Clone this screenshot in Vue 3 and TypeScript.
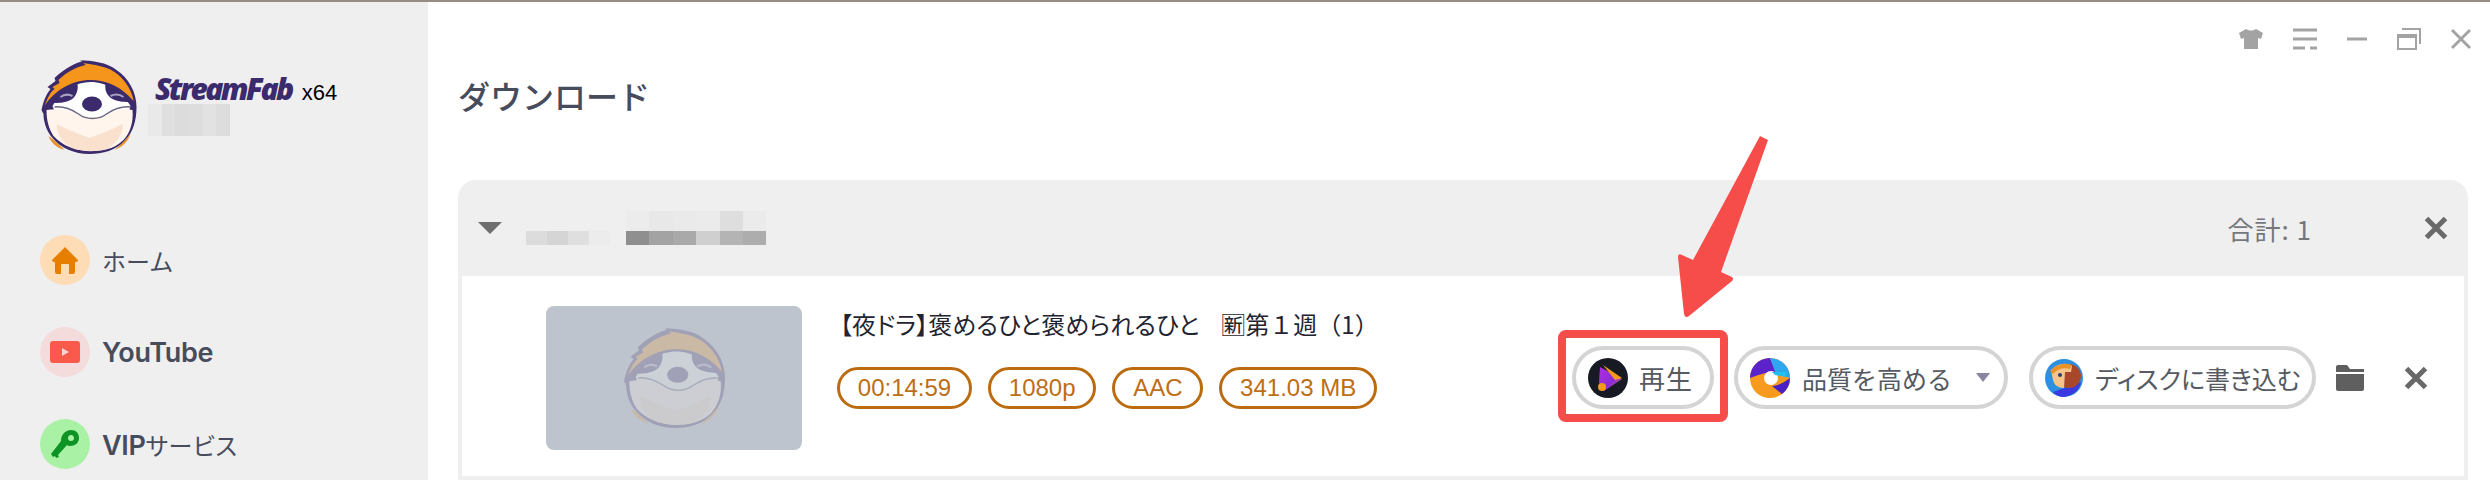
<script setup lang="ts">
const tags: string[] = ['00:14:59', '1080p', 'AAC', '341.03 MB']

// mosaic blocks that hide the account name and the group title
const accountBlur: string[] = ['#e9e9ea', '#dfdfe0', '#dcdcdd', '#dddddd', '#e2e2e3', '#dddddd']
const nameBlurTop: string[] = ['#ececec', '#e8e8e8', '#eaeaea', '#ebebeb', '#dedede', '#ebebeb']
const nameBlurLeft: string[] = ['#dcdcdc', '#d5d5d5', '#dfdfdf', '#ececec']
const nameBlurRight: string[] = ['#8f8f8f', '#a3a3a3', '#a9a9a9', '#cfcfcf', '#b4b4b4', '#adadad']
</script>

<template>
  <div class="page">
    <svg class="defs" width="0" height="0">
      <defs>
        <symbol id="sloth" viewBox="0 0 96 94">
          <path d="M1 50 C3 40 6 34 10 29 L7 27 L15 21 L14 18 C24 8 36 3 42 1 L39 0 C52 1 66 2 76 10 C88 18 96 32 96 47 C96 60 93 72 84 81 C76 90 62 94 49 94 C34 94 20 88 12 78 C5 70 3 60 3 54 Z" fill="#3b2a6c"/>
          <path d="M4 46 C8 36 10 32 14 29 L12 27 L19 23 L18 20 C26 12 36 7 45 5 L43 3 C54 5 68 6 78 15 C86 22 92 32 93 41 C80 26 66 20 50 20 C32 20 14 30 4 46 Z" fill="#f6951b"/>
          <path d="M12 46 C20 30 36 22 50 22 C66 22 82 32 90 46 L84 66 L20 66 Z" fill="#fff"/>
          <path d="M12 43 C18 32 28 26 37 24 C38 29 36 37 30 40 C24 43 17 43 12 43 Z" fill="#3b2a6c"/>
          <path d="M90 42 C85 31 75 25 65 24 C64 29 66 36 72 39 C78 42 85 42 90 42 Z" fill="#3b2a6c"/>
          <path d="M20 37 C24 34 28 34 32 36 M70 36 C74 34 79 34 83 37" stroke="#a9a2c0" stroke-width="2" fill="none"/>
          <ellipse cx="51.500" cy="44" rx="10" ry="7.500" fill="#3b2a6c"/>
          <path d="M6 50 C18 48 28 50 36 54 C46 60 58 60 68 54 C76 50 84 48 92 50 C93 62 90 72 83 80 C73 90 60 91 49 91 C36 91 22 86 13 76 C8 68 6 60 6 50 Z" fill="#fff5ec"/>
          <path d="M16 64 C28 70 38 74 49 78 C60 74 70 70 82 64 C84 72 76 84 66 89 C56 92 42 92 32 88 C24 84 16 76 16 64 Z" fill="#f9e1cd"/>
          <path d="M8 76 C14 80 19 85 24 90 C16 88 10 82 8 76 Z M90 74 C85 80 80 85 74 90 C82 87 88 81 90 74 Z" fill="#e8912a"/>
          <path d="M14 47 C24 46 32 50 38 54 C46 60 58 60 66 54 C72 50 80 46 90 47" stroke="#6b6780" stroke-width="1.500" fill="none"/>
        </symbol>
      </defs>
    </svg>

    <div class="topline"></div>

    <div class="app">
      <aside class="sidebar">
        <div class="brand">
          <svg class="logo"><use href="#sloth"/></svg>
          <div class="brand-text">
            <div class="brand-name">
              <span class="stream">StreamFab</span>
              <span class="bits">x64</span>
            </div>
            <div class="account-blur">
              <i v-for="(c, i) in accountBlur" :key="i" :style="{ background: c }"></i>
            </div>
          </div>
        </div>

        <nav class="nav">
          <div class="nav-item">
            <span class="nav-icon home">
              <svg width="28" height="28" viewBox="0 0 28 28">
                <path d="M14 1 L27 14 Q27 16 25 16 L24 16 L24 26 Q24 28 22 28 L18 28 L18 19 Q18 18 17 18 L11 18 Q10 18 10 19 L10 28 L6 28 Q4 28 4 26 L4 16 L3 16 Q1 16 1 14 Z" fill="#e67f00"/>
              </svg>
            </span>
            <span class="nav-label thin">ホーム</span>
          </div>
          <div class="nav-item">
            <span class="nav-icon yt">
              <svg width="30" height="22" viewBox="0 0 30 22">
                <rect width="30" height="22" rx="3" fill="#fa5a4c"/>
                <path d="M12 7 L19 11 L12 15 Z" fill="#fbd5d0"/>
              </svg>
            </span>
            <span class="nav-label">YouTube</span>
          </div>
          <div class="nav-item">
            <span class="nav-icon vip">
              <svg width="30" height="30" viewBox="0 0 30 30">
                <path fill-rule="evenodd" d="M21 1 C26 1 29 4 29 9 C29 14 25 17 20 17 C19 17 18 17 17 16 L8 26 L9 28 L6 29 L5 27 L3 28 L1 25 L11 12 C11 6 15 1 21 1 Z M21 6 C19 6 18 7.500 18 9 C18 11 19 12 21 12 C23 12 24 11 24 9 C24 7.500 23 6 21 6 Z" fill="#0e9424"/>
              </svg>
            </span>
            <span class="nav-label">VIP<span class="thin kana">サービス</span></span>
          </div>
        </nav>
      </aside>

      <main class="main">
        <div class="winbar">
          <svg width="24" height="22" viewBox="0 0 24 22">
            <path d="M7 1 Q12 4 17 1 L24 5 L22 11 L19 10 L19 21 L5 21 L5 10 L2 11 L0 5 Z" fill="#a3a3a3"/>
          </svg>
          <svg width="24" height="22" viewBox="0 0 24 22">
            <path d="M0 2 H24 M0 11 H24 M0 20 H12 M17 20 H24" stroke="#a3a3a3" stroke-width="3"/>
          </svg>
          <svg width="20" height="22" viewBox="0 0 20 22">
            <path d="M0 11 H20" stroke="#a3a3a3" stroke-width="3"/>
          </svg>
          <svg width="24" height="22" viewBox="0 0 24 22">
            <path d="M5 1 H23 V16 M1 7 H19 V21 H1 Z M1 9 H19" stroke="#a3a3a3" stroke-width="2" fill="none"/>
            <path d="M1 7 H19 V10 H1 Z" fill="#a3a3a3"/>
          </svg>
          <svg width="20" height="22" viewBox="0 0 20 22">
            <path d="M1 2 L19 20 M19 2 L1 20" stroke="#a3a3a3" stroke-width="3"/>
          </svg>
        </div>

        <h1 class="title">ダウンロード</h1>

        <section class="card">
          <header class="card-head">
            <span class="caret"></span>
            <div class="name-blur">
              <div class="blur-col">
                <div class="blur-row top-left"></div>
                <div class="blur-row">
                  <i v-for="(c, i) in nameBlurLeft" :key="i" :style="{ background: c }"></i>
                </div>
              </div>
              <div class="blur-col">
                <div class="blur-row">
                  <i v-for="(c, i) in nameBlurTop" :key="i" :style="{ background: c }"></i>
                </div>
                <div class="blur-row">
                  <i v-for="(c, i) in nameBlurRight" :key="i" :style="{ background: c }"></i>
                </div>
              </div>
            </div>
            <span class="total">合計: 1</span>
            <svg class="head-close" width="24" height="24" viewBox="0 0 24 24">
              <path d="M2.500 2.500 L21.500 21.500 M21.500 2.500 L2.500 21.500" stroke="#696969" stroke-width="5"/>
            </svg>
          </header>

          <div class="row">
            <div class="thumb">
              <svg class="thumb-logo"><use href="#sloth"/></svg>
            </div>

            <div class="info">
              <div class="video-title">【夜ドラ】褒めるひと褒められるひと<span class="episode">🈟第１週（1）</span></div>
              <div class="tags">
                <span v-for="t in tags" :key="t" class="tag">{{ t }}</span>
              </div>
            </div>

            <div class="actions">
              <button class="pill play">
                <svg width="40" height="40" viewBox="0 0 40 40">
                  <defs>
                    <linearGradient id="playGrad" x1="0" y1="0" x2="1" y2="1">
                      <stop offset="0" stop-color="#b02fe0"/>
                      <stop offset="0.6" stop-color="#8c2bd8"/>
                      <stop offset="1" stop-color="#f08c1e"/>
                    </linearGradient>
                  </defs>
                  <circle cx="20" cy="20" r="20" fill="#171a22"/>
                  <path d="M12 9 L34 21 L16 33 Q11 30 11 24 Z" fill="url(#playGrad)"/>
                  <path d="M15 7 L34 20 L27 22 Z" fill="#f59a1c"/>
                  <circle cx="14" cy="29" r="4" fill="#f59a1c"/>
                </svg>
                <span class="wide">再生</span>
              </button>

              <button class="pill upscale">
                <svg width="40" height="40" viewBox="0 0 40 40">
                  <circle cx="20" cy="20" r="20" fill="#f79a1e"/>
                  <path d="M0 20 A20 20 0 0 1 20 0 L26 14 Q14 14 0 20 Z" fill="#5b23c9"/>
                  <path d="M20 0 A20 20 0 0 1 40 20 L26 16 Z" fill="#2fa7f0"/>
                  <path d="M40 20 A20 20 0 0 1 32 36 L22 28 Q30 28 40 20 Z" fill="#4a1fc4"/>
                  <circle cx="21" cy="20" r="7" fill="#fff"/>
                  <path d="M22 14 H36 V19 L25 17 Z" fill="#25c0ef"/>
                </svg>
                <span class="label">品質を高める</span>
                <span class="pill-caret"></span>
              </button>

              <button class="pill disc">
                <svg width="38" height="40" viewBox="0 0 38 40">
                  <circle cx="19" cy="20" r="19" fill="#2c8fe0"/>
                  <path d="M8 34 Q20 30 36 24 Q34 36 19 39 Q12 39 8 34 Z" fill="#3a3ae0"/>
                  <circle cx="24" cy="18" r="12" fill="#a8482a"/>
                  <path d="M6 12 Q16 2 27 8 L26 14 L20 14 L19 30 Q10 30 8 22 Z" fill="#f5c48a"/>
                  <path d="M5 13 Q15 3 27 7 L25 11 Q15 8 8 16 Z" fill="#e9922a"/>
                  <circle cx="15" cy="17" r="2" fill="#2d3a70"/>
                </svg>
                <span class="palt">ディスクに書き込む</span>
              </button>

              <svg class="folder" width="28" height="26" viewBox="0 0 28 26">
                <path d="M2 0 H11 L14 4 H28 V7 H0 V2 Q0 0 2 0 Z M0 9 H28 V24 Q28 26 26 26 H2 Q0 26 0 24 Z" fill="#5f5f5f"/>
              </svg>
              <svg class="row-close" width="24" height="24" viewBox="0 0 24 24">
                <path d="M2.500 2.500 L21.500 21.500 M21.500 2.500 L2.500 21.500" stroke="#696969" stroke-width="5"/>
              </svg>
            </div>
          </div>
        </section>
      </main>
    </div>

    <!-- annotations drawn over the screenshot -->
    <div class="mark-box"></div>
    <svg class="mark-arrow" width="100" height="190" viewBox="0 0 100 190">
      <path d="M82 1 L90 5 L43 137 L54 142 Q56 144 54 146 L11 181 Q7 184 6 179 L0 122 Q0 118 4 120 L15 125 Z" fill="#f64d4b"/>
    </svg>
  </div>
</template>

<style scoped>
.page {
  position: relative;
  width: 2490px;
  height: 480px;
  overflow: hidden;
  background: #fff;
  font-family: "Liberation Sans", "Noto Sans CJK JP", sans-serif;
}

.defs {
  position: absolute;
}

.topline {
  height: 2px;
  background: #978b82;
}

.app {
  display: flex;
  height: 478px;
}

.sidebar {
  width: 428px;
  flex-shrink: 0;
  background: #efeff0;
  padding: 58px 0 0 40px;
  box-sizing: border-box;
}

.brand {
  display: flex;
  height: 94px;
}

.logo {
  width: 97px;
  height: 94px;
  flex-shrink: 0;
}

.brand-text {
  margin-left: 11px;
}

.brand-name {
  display: flex;
  align-items: baseline;
  height: 44px;
  padding: 12px 0 0 7px;
  box-sizing: border-box;
}

.stream {
  font-family: "Open Sans", sans-serif;
  font-weight: 800;
  font-style: italic;
  font-size: 30px;
  letter-spacing: -2.600px;
  line-height: 34px;
  color: #3b2a6c;
}

.bits {
  margin-left: 10px;
  font-size: 22px;
  color: #000;
}

.account-blur {
  display: flex;
  width: 82px;
  height: 32px;
}

.account-blur i {
  flex: 1;
}

.nav {
  display: flex;
  flex-direction: column;
  gap: 42px;
  margin-top: 81px;
}

.nav-item {
  display: flex;
  align-items: center;
  gap: 12px;
  height: 50px;
}

.nav-icon {
  width: 50px;
  height: 50px;
  border-radius: 50%;
  display: flex;
  align-items: center;
  justify-content: center;
}

.home { background: #fddcb6; }
.yt { background: #f5dcdc; }
.vip { background: #a9f2a5; }

.nav-label {
  font-family: Inter, "Noto Sans CJK JP", sans-serif;
  font-size: 27px;
  font-weight: 600;
  letter-spacing: -0.300px;
  color: #474c5c;
}

.thin {
  font-family: "Noto Sans CJK JP", sans-serif;
  font-size: 24px;
  font-weight: 400;
  letter-spacing: 0;
}

.kana {
  font-feature-settings: "palt";
  letter-spacing: 0.500px;
}

.main {
  flex: 1;
  position: relative;
  padding-left: 30px;
}

.winbar {
  display: flex;
  justify-content: flex-end;
  align-items: center;
  gap: 30px;
  width: 2013px;
  height: 22px;
  margin-top: 26px;
}

.title {
  margin: 22px 0 0;
  font-family: "Noto Sans CJK JP", sans-serif;
  font-size: 32px;
  line-height: 46px;
  font-weight: 500;
  color: #474c5c;
}

.card {
  width: 2010px;
  height: 300px;
  margin-top: 62px;
  background: #efefef;
  border-radius: 18px 18px 0 0;
  box-sizing: border-box;
  padding: 0 4px 4px;
}

.card-head {
  display: flex;
  align-items: center;
  height: 96px;
}

.caret {
  width: 0;
  height: 0;
  margin: 0 0 0 16px;
  border-left: 12px solid transparent;
  border-right: 12px solid transparent;
  border-top: 12px solid #6e6e6e;
}

.name-blur {
  display: flex;
  gap: 16px;
  margin-left: 24px;
}

.blur-col {
  display: flex;
  flex-direction: column;
}

.blur-row {
  display: flex;
  height: 14px;
}

.blur-row i {
  display: block;
  width: 20px;
  height: 100%;
}

.blur-col:first-child .blur-row i { width: 21px; }
.blur-col:last-child .blur-row i { width: 23.400px; }
.blur-col:last-child .blur-row:first-child { height: 20px; }
.top-left { height: 20px; }

.total {
  margin-left: auto;
  font-family: "Noto Sans CJK JP", sans-serif;
  font-size: 26px;
  letter-spacing: 1px;
  color: #74777c;
}

.head-close {
  margin: 0 16px 0 112px;
}

.row {
  display: flex;
  align-items: flex-start;
  height: 200px;
  background: #fff;
  padding: 30px 0 0 84px;
  box-sizing: border-box;
}

.thumb {
  width: 256px;
  height: 144px;
  flex-shrink: 0;
  border-radius: 8px;
  background: #bec4cd;
  display: flex;
  align-items: center;
  justify-content: center;
}

.thumb-logo {
  width: 102px;
  height: 100px;
  opacity: 0.22;
}

.info {
  margin-left: 32px;
  width: 738px;
  flex-shrink: 0;
}

.video-title {
  font-family: "Noto Sans CJK JP", sans-serif;
  font-feature-settings: "palt";
  font-size: 24px;
  letter-spacing: 0.100px;
  line-height: 36px;
  color: #1f2430;
  white-space: nowrap;
  padding-left: 6px;
}

.episode {
  margin-left: 22px;
  font-feature-settings: normal;
  letter-spacing: 0;
}

.tags {
  display: flex;
  gap: 16px;
  margin: 25px 0 0 3px;
}

.tag {
  height: 42px;
  padding: 0 17.800px;
  box-sizing: border-box;
  border: 3.500px solid #bb6c10;
  border-radius: 21px;
  font-size: 24px;
  line-height: 35px;
  color: #bd6e16;
}

.actions {
  display: flex;
  align-items: center;
  height: 63px;
  margin-top: 40px;
}

.pill {
  display: flex;
  align-items: center;
  flex-shrink: 0;
  height: 63px;
  padding: 0 0 0 12px;
  background: #fff;
  border: 4px solid #d4d4d4;
  border-radius: 32px;
  box-sizing: border-box;
  font-family: "Noto Sans CJK JP", sans-serif;
  font-size: 25px;
  color: #555a63;
  white-space: nowrap;
}

.pill svg {
  flex-shrink: 0;
}

.play {
  width: 142px;
}

.wide {
  margin-left: 11px;
  font-size: 26px;
  letter-spacing: 1px;
}

.upscale {
  width: 274px;
  margin-left: 20px;
}

.label {
  margin-left: 12px;
}

.pill-caret {
  width: 0;
  height: 0;
  margin-left: 24px;
  border-left: 7px solid transparent;
  border-right: 7px solid transparent;
  border-top: 9px solid #8a86a0;
}

.disc {
  width: 287px;
  margin-left: 21px;
}

.palt {
  margin-left: 12px;
  font-feature-settings: "palt";
}

.folder {
  margin-left: 20px;
}

.row-close {
  margin-left: 40px;
}

.mark-box {
  position: absolute;
  left: 1558px;
  top: 330px;
  width: 170px;
  height: 92px;
  box-sizing: border-box;
  border: 8px solid #f64d4b;
  border-radius: 8px;
}

.mark-arrow {
  position: absolute;
  left: 1678px;
  top: 135px;
}
</style>

<style>
html, body {
  margin: 0;
  background: #fff;
}
</style>
